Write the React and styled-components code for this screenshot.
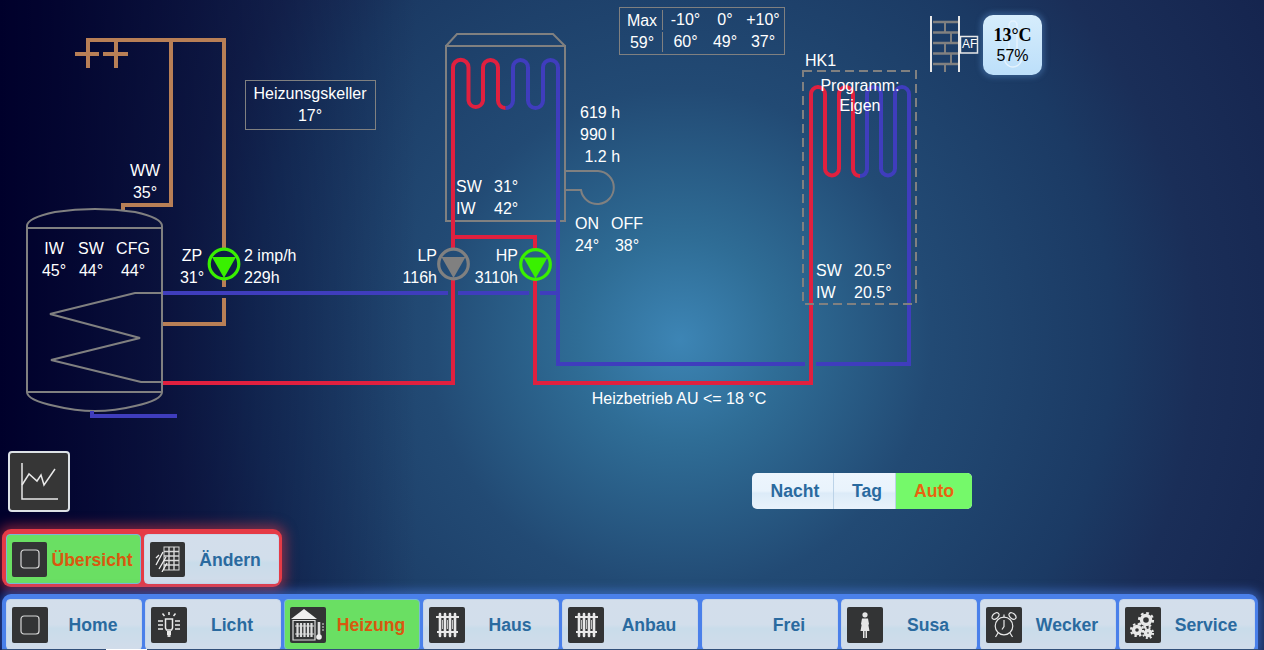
import styled, { createGlobalStyle } from "styled-components";

const GlobalStyle = createGlobalStyle`
  html, body {
    margin: 0;
    padding: 0;
    height: 100%;
  }
  body {
    font-family: "Liberation Sans", Arial, sans-serif;
    font-size: 16px;
    color: #fff;
  }
`;

const Page = styled.div`
  display: flex;
  flex-direction: column;
  height: 650px;
  overflow: hidden;
  background:
    linear-gradient(to right, rgba(0, 0, 43, 1) 0, rgba(0, 0, 43, 0) 33%),
    radial-gradient(
      circle 720px at 680px 340px,
      #3d85b5 0,
      #2f6d96 14%,
      #224a74 35%,
      #1b3a64 60%,
      #1a2e58 72%,
      #14224c 100%
    );
`;

const Canvas = styled.div`
  position: relative;
  flex: 1;
`;

const Pipes = styled.svg`
  position: absolute;
  inset: 0;
  width: 100%;
  height: 100%;
`;

const Label = styled.div`
  position: absolute;
  left: ${(p) => p.$x}px;
  top: ${(p) => p.$y}px;
  transform: ${(p) =>
    p.$align === "center" ? "translateX(-50%)" : p.$align === "right" ? "translateX(-100%)" : "none"};
  text-align: ${(p) => p.$align || "left"};
  line-height: ${(p) => p.$lh || 22}px;
  font-size: ${(p) => p.$size || 16}px;
  white-space: pre;
`;

const RoomBox = styled.div`
  position: absolute;
  left: 245px;
  top: 80px;
  box-sizing: border-box;
  width: 131px;
  height: 50px;
  padding-right: 1px;
  border: 1px solid #808080;
  display: flex;
  flex-direction: column;
  justify-content: center;
  text-align: center;
  line-height: 22px;
`;

const CurveTable = styled.div`
  position: absolute;
  left: 619px;
  top: 7px;
  width: 164px;
  height: 46px;
  border: 1px solid #808080;
  display: grid;
  grid-template-columns: 43px 45px 34px 42px;
  grid-auto-rows: 22px;
  align-content: center;
  text-align: center;
`;

const CurveCell = styled.div`
  line-height: 22px;
  padding-left: ${(p) => (p.$divider ? "2px" : "0")};
  border-right: ${(p) => (p.$divider ? "1px solid #808080" : "none")};
  margin: ${(p) => (p.$divider ? "1px 0" : "0")};
`;

const WeatherTile = styled.div`
  position: absolute;
  left: 983px;
  top: 15px;
  width: 59px;
  height: 60px;
  border-radius: 10px;
  background: linear-gradient(#d6edfc, #bcdffa);
  box-shadow: 0 0 5px 3px rgba(90, 140, 200, 0.35);
  color: #000;
  display: flex;
  flex-direction: column;
  align-items: center;
  justify-content: center;
  overflow: hidden;
`;

const Ghost = styled.svg`
  position: absolute;
  left: 20px;
  top: 5px;
`;

const WeatherTemp = styled.div`
  position: relative;
  font-family: "Liberation Serif", "Times New Roman", serif;
  font-weight: bold;
  font-size: 18px;
  line-height: 21px;
`;

const WeatherHum = styled.div`
  position: relative;
  font-size: 16px;
  line-height: 20px;
`;

const ControlRow = styled.div`
  display: flex;
  align-items: flex-end;
  height: 61px;
  padding-left: 8px;
  margin-bottom: 17px;
`;

const ChartButton = styled.div`
  box-sizing: border-box;
  width: 62px;
  height: 61px;
  border: 2px solid #dde2e6;
  border-radius: 4px;
  background: #363636;
  display: flex;
  align-items: center;
  justify-content: center;
`;

const Toggle = styled.div`
  display: flex;
  height: 36px;
  margin: 0 0 3px 682px;
  border-radius: 5px;
  overflow: hidden;
  background: linear-gradient(#edf5fd 0, #e9f3fc 50%, #dcebf8 56%, #e9f2fb 100%);
`;

const ToggleItem = styled.div`
  box-sizing: border-box;
  width: ${(p) => p.$w}px;
  padding-top: 1px;
  padding-left: ${(p) => (p.$active ? "0" : "5px")};
  display: flex;
  align-items: center;
  justify-content: center;
  font-weight: bold;
  font-size: 17.6px;
  color: ${(p) => (p.$active ? "#e8640f" : "#2a6a9f")};
  background: ${(p) => (p.$active ? "#75f96a" : "transparent")};
  border-right: ${(p) => (p.$active ? "none" : "1px solid #bcd3e8")};
`;

const SubBar = styled.div`
  display: flex;
  gap: 3px;
  align-self: flex-start;
  box-sizing: border-box;
  width: 280px;
  height: 58px;
  margin-left: 2px;
  margin-bottom: 7px;
  padding: 5px 4px 3px;
  background: #e53b46;
  border-radius: 9px;
  box-shadow: 0 0 12px 4px rgba(229, 59, 70, 0.5);
`;

const MainBar = styled.div`
  position: relative;
  display: flex;
  gap: 3px;
  box-sizing: border-box;
  width: 1256px;
  height: 56px;
  margin-left: 2px;
  padding: 5px 4px 0;
  background: #4a80ea;
  border-radius: 9px 9px 0 0;
  box-shadow: 0 0 10px 4px rgba(74, 128, 234, 0.5);

  &::after {
    content: "";
    position: absolute;
    left: 0;
    right: 0;
    bottom: 0;
    height: 1px;
    background: #33507a;
  }
`;

const BottomNotch = styled.div`
  position: absolute;
  z-index: 1;
  left: 104px;
  bottom: 0;
  width: 41px;
  height: 1px;
  background: #fff;
`;

const NavButton = styled.div`
  display: flex;
  align-items: center;
  flex: none;
  box-sizing: border-box;
  width: ${(p) => (p.$small ? "135px" : "136px")};
  margin-left: ${(p) => (p.$nudge ? "1px" : "0")};
  padding-left: 5px;
  padding-right: 3px;
  border-radius: 4px;
  font-weight: bold;
  font-size: 17.6px;
  color: ${(p) => (p.$active ? "#d9580f" : "#2a6a9f")};
  background: ${(p) =>
    p.$active
      ? "#6adf63"
      : "linear-gradient(#d3deeb 0, #d2deeb 50%, #c9dcea 58%, #d1dcea 100%)"};
  border: 1px solid ${(p) => (p.$active ? "#79b8d8" : "#c6d6ea")};
`;

const IconTile = styled.div`
  flex: none;
  width: ${(p) => (p.$small ? 35 : 36)}px;
  height: ${(p) => (p.$small ? 35 : 36)}px;
  border-radius: 2px;
  background: ${(p) => (p.$empty ? "transparent" : "#333435")};
  display: flex;
  align-items: center;
  justify-content: center;
`;

const NavText = styled.div`
  flex: 1;
  padding-top: 2px;
  text-align: center;
`;

const PIPE_RED = "#e0203f";
const PIPE_BLUE = "#3f3dbd";
const PIPE_BROWN = "#b87f56";
const GREY = "#808080";
const PUMP_GREEN = "#39f000";

function Pump({ x, y, color }) {
  return (
    <g>
      <circle cx={x} cy={y} r="14.8" fill="none" stroke={color} strokeWidth="3.2" />
      <polygon points={`${x - 12},${y - 7} ${x + 12},${y - 7} ${x},${y + 14}`} fill={color} />
    </g>
  );
}

function Diagram() {
  return (
    <Pipes viewBox="0 0 1264 451">
      <g fill="none" stroke={PIPE_BROWN} strokeWidth="4">
        <path d="M88 68V40H224V250" />
        <path d="M224 279V287M224 298V324H163" />
        <path d="M75 54H99M103 54H128M116 40V68" />
        <path d="M171 40V205H123V210" />
      </g>

      <g fill="none" stroke={GREY} strokeWidth="2">
        <path d="M27 228V226Q27 218 55 212Q75 209 95 209Q115 209 135 212Q162 218 162 226V392Q162 400 135 406Q115 411 95 411Q75 411 55 406Q27 400 27 392V228Z" />
        <path d="M27 228H162M27 392H162" />
        <path d="M162 293H135L50 314L140 338L51 360L141 382H162" />
        <path d="M446 46H565V221H446ZM446 46L457 34H553L565 46" />
        <path d="M565 171H598A16.5 16.5 0 1 1 581 190H565" />
      </g>

      <g fill="none" stroke={PIPE_BLUE} strokeWidth="4">
        <path d="M163 293H448M458 293H529M540 293H558" />
        <path d="M92 411V416H177" />
        <path d="M505.5 108A7.5 7.5 0 0 0 513 100.5V67.5A7.5 7.5 0 0 1 528 67.5V100.5A7.5 7.5 0 0 0 543 100.5V67.5A7.5 7.5 0 0 1 558 67.5V364H805" />
        <path d="M816 364H909V94A7 7 0 0 0 895 94V168.5A7 7 0 0 1 881 168.5V94A7 7 0 0 0 867 94V168.5A7 7 0 0 1 860 176" />
      </g>

      <g fill="none" stroke={PIPE_RED} strokeWidth="4">
        <path d="M163 383H453V279M453 250V67.5A7.7 7.7 0 0 1 468.5 67.5V100.5A7.3 7.3 0 0 0 483 100.5V67.5A7.5 7.5 0 0 1 498 67.5V100.5A7.5 7.5 0 0 0 505.5 108" />
        <path d="M453 237H535V250" />
        <path d="M535 279V383H811V94A7 7 0 0 1 825 94V168.5A7 7 0 0 0 839 168.5V94A7 7 0 0 1 853 94V168.5A7 7 0 0 0 860 176" />
      </g>

      <Pump x={224} y={264} color={PUMP_GREEN} />
      <Pump x={453.5} y={264} color={GREY} />
      <Pump x={535.5} y={264.5} color={PUMP_GREEN} />

      <rect x="803" y="71" width="113" height="233" fill="none" stroke={GREY} strokeWidth="2" strokeDasharray="9 5" />

      <g fill="none" stroke={GREY}>
        <path d="M933 22H958M933 32.500H958M933 43H958M933 53.500H958M933 64H958" strokeWidth="2.400" />
        <path d="M945 22V32.500M951 32.500V43M945 43V53.500M951 53.500V64M945 64V72" strokeWidth="2" />
      </g>
      <path d="M931 16V72M959 16V72" stroke="#e8e8e8" strokeWidth="2" fill="none" />
      <rect x="960.500" y="36.500" width="17" height="16.500" fill="none" stroke="#e8e8e8" strokeWidth="1.500" />
    </Pipes>
  );
}

function OutlineSquare() {
  return (
    <svg width="20" height="20" viewBox="0 0 20 20">
      <rect x="1" y="1" width="18" height="18" rx="3" fill="none" stroke="#d8d8d8" strokeWidth="1.200" />
    </svg>
  );
}

function ChartIcon() {
  return (
    <svg width="37" height="37" viewBox="0 0 37 37" fill="none" stroke="#e8e8e8" strokeWidth="1.500">
      <path d="M1 0V36H37" />
      <path d="M1 22L8 11L16 18L20 12L23 22L34 6" />
    </svg>
  );
}

function WindowIcon() {
  return (
    <svg width="26" height="26" viewBox="0 0 26 26" fill="none" stroke="#d8d8d8">
      <rect x="9" y="1" width="15" height="23" strokeWidth="1" />
      <path d="M9 5.500H24M9 10H24M9 14.500H24M9 19H24M14 1V24M19 1V24" strokeWidth="1.400" />
      <path d="M1 12L4 9M1 19L8 6M4 23L11 11M7 26L12 17" strokeWidth="1.300" stroke="#f0f0f0" />
    </svg>
  );
}

function BulbIcon() {
  return (
    <svg width="24" height="28" viewBox="0 0 24 28" fill="none" stroke="#ececec" strokeWidth="1.500">
      <path d="M8.500 8H15.500V17L14.500 19H9.500L8.500 17Z" />
      <path d="M10 21H14M10 23H14" strokeWidth="1.800" />
      <path d="M10.500 25H13.500" strokeWidth="1.800" />
      <path d="M12 1V4M5.500 2.500L7.500 5M18.500 2.500L16.500 5M1 10H6M18 10H23M1 14H6M18 14H23M1 18H6M18 18H23" />
    </svg>
  );
}

function Radiator() {
  return (
    <svg width="26" height="26" viewBox="0 0 26 26" fill="none" stroke="#e8e8e8">
      <path d="M6 2V24M11 2V24M16 2V24M21 2V24" strokeWidth="2.600" strokeLinecap="round" />
      <path d="M2 5H25M3 20H24" strokeWidth="2.200" />
      <path d="M8.500 8V17M13.500 8V17M18.500 8V17" strokeWidth="0.800" />
    </svg>
  );
}

function HeatingIcon() {
  return (
    <svg width="34" height="34" viewBox="0 0 34 34" fill="none" stroke="#dcdcdc">
      <polygon points="0,11 13,1 26,11" fill="#efefef" stroke="none" />
      <path d="M2 12.500H24V32H2Z" strokeWidth="1.200" />
      <path d="M6.500 15V29M10 15V29M13.500 15V29M17 15V29M20.500 15V29" strokeWidth="2.200" />
      <path d="M4 18H23M4 26H23" strokeWidth="1" />
      <path d="M28 14V27" strokeWidth="2.600" />
      <circle cx="28" cy="29" r="2.800" fill="#efefef" stroke="none" />
      <path d="M31 16H33M31 19H33M31 22H33" strokeWidth="1" />
    </svg>
  );
}

function WomanIcon() {
  return (
    <svg width="12" height="26" viewBox="0 0 12 26" fill="#e6e6e6">
      <circle cx="6" cy="2.800" r="2.600" />
      <path d="M3 6.500H9L10 12L9.400 13L10.500 19H8V26H6.500V19H5.500V26H4V19H1.500L2.600 13L2 12Z" />
    </svg>
  );
}

function ClockIcon() {
  return (
    <svg width="26" height="27" viewBox="0 0 26 27" fill="none" stroke="#e8e8e8" strokeWidth="1.200">
      <circle cx="13" cy="15" r="8.800" />
      <path d="M13 9V15.500L11 18.500" />
      <ellipse cx="4.500" cy="5" rx="4" ry="2.600" transform="rotate(-42 4.500 5)" />
      <ellipse cx="21.500" cy="5" rx="4" ry="2.600" transform="rotate(42 21.500 5)" />
      <path d="M7 22L4.500 26M19 22L21.500 26M13 6.200V3.500" />
    </svg>
  );
}

// zacken per gestricheltem Ring, innen ein durchgehender Ring
function Gear({ cx, cy, r }) {
  const dash = (2 * Math.PI * r) / 16;
  return (
    <g fill="none" stroke="#e8e8e8">
      <circle cx={cx} cy={cy} r={r} strokeWidth="2.200" strokeDasharray={dash} />
      <circle cx={cx} cy={cy} r={r - 2.500} strokeWidth="3.400" />
    </g>
  );
}

function GearsIcon() {
  return (
    <svg width="30" height="30" viewBox="0 0 30 30">
      <Gear cx={18} cy={10} r={7} />
      <Gear cx={9} cy={20} r={6} />
      <Gear cx={20} cy={23} r={5} />
    </svg>
  );
}

function ThermoGhost() {
  return (
    <Ghost width="20" height="50" viewBox="0 0 20 50" fill="none" stroke="#e4f2fd" strokeWidth="1.500">
      <path d="M6 5A4 4 0 0 1 14 5V31A8.500 8.500 0 1 1 6 31Z" />
    </Ghost>
  );
}

const TOGGLES = [
  { label: "Nacht", w: 82 },
  { label: "Tag", w: 62 },
  { label: "Auto", w: 76, active: true },
];

const SUB_ITEMS = [
  { label: "Übersicht", icon: <OutlineSquare />, active: true },
  { label: "Ändern", icon: <WindowIcon /> },
];

const MAIN_ITEMS = [
  { label: "Home", icon: <OutlineSquare /> },
  { label: "Licht", icon: <BulbIcon /> },
  { label: "Heizung", icon: <HeatingIcon />, active: true },
  { label: "Haus", icon: <Radiator /> },
  { label: "Anbau", icon: <Radiator /> },
  { label: "Frei", nudge: true },
  { label: "Susa", icon: <WomanIcon /> },
  { label: "Wecker", icon: <ClockIcon /> },
  { label: "Service", icon: <GearsIcon /> },
];

export default function App() {
  return (
    <Page>
      <GlobalStyle />
      <Canvas>
        <Diagram />

        <RoomBox>
          <div>Heizunsgskeller</div>
          <div>17°</div>
        </RoomBox>

        <Label $x={145} $y={160} $align="center">{"WW\n35°"}</Label>
        <Label $x={54} $y={238} $align="center">{"IW\n45°"}</Label>
        <Label $x={91} $y={238} $align="center">{"SW\n44°"}</Label>
        <Label $x={133} $y={238} $align="center">{"CFG\n44°"}</Label>
        <Label $x={192} $y={245} $align="center">{"ZP\n31°"}</Label>
        <Label $x={244} $y={245}>{"2 imp/h\n229h"}</Label>
        <Label $x={437} $y={245} $align="right">{"LP\n116h"}</Label>
        <Label $x={518} $y={245} $align="right">{"HP\n3110h"}</Label>
        <Label $x={456} $y={176}>{"SW\nIW"}</Label>
        <Label $x={494} $y={176}>{"31°\n42°"}</Label>
        <Label $x={580} $y={102}>{"619 h\n990 l\n 1.2 h"}</Label>
        <Label $x={587} $y={213} $align="center">{"ON\n24°"}</Label>
        <Label $x={627} $y={213} $align="center">{"OFF\n38°"}</Label>
        <Label $x={805} $y={50}>HK1</Label>
        <Label $x={860} $y={76} $align="center" $lh={20}>{"Programm:\nEigen"}</Label>
        <Label $x={816} $y={260}>{"SW\nIW"}</Label>
        <Label $x={854} $y={260}>{"20.5°\n20.5°"}</Label>
        <Label $x={679} $y={388} $align="center">{"Heizbetrieb AU <= 18 °C"}</Label>
        <Label $x={962} $y={36} $size={12} $lh={17}>AF</Label>

        <CurveTable>
          <CurveCell $divider>Max</CurveCell>
          <CurveCell>-10°</CurveCell>
          <CurveCell>0°</CurveCell>
          <CurveCell>+10°</CurveCell>
          <CurveCell $divider>59°</CurveCell>
          <CurveCell>60°</CurveCell>
          <CurveCell>49°</CurveCell>
          <CurveCell>37°</CurveCell>
        </CurveTable>

        <WeatherTile>
          <ThermoGhost />
          <WeatherTemp>13°C</WeatherTemp>
          <WeatherHum>57%</WeatherHum>
        </WeatherTile>
      </Canvas>

      <ControlRow>
        <ChartButton>
          <ChartIcon />
        </ChartButton>
        <Toggle>
          {TOGGLES.map((t) => (
            <ToggleItem key={t.label} $w={t.w} $active={t.active}>
              {t.label}
            </ToggleItem>
          ))}
        </Toggle>
      </ControlRow>

      <SubBar>
        {SUB_ITEMS.map((item) => (
          <NavButton key={item.label} $small $active={item.active}>
            <IconTile $small>{item.icon}</IconTile>
            <NavText>{item.label}</NavText>
          </NavButton>
        ))}
      </SubBar>

      <MainBar>
        <BottomNotch />
        {MAIN_ITEMS.map((item) => (
          <NavButton key={item.label} $active={item.active} $nudge={item.nudge}>
            <IconTile $empty={!item.icon}>{item.icon}</IconTile>
            <NavText>{item.label}</NavText>
          </NavButton>
        ))}
      </MainBar>
    </Page>
  );
}
